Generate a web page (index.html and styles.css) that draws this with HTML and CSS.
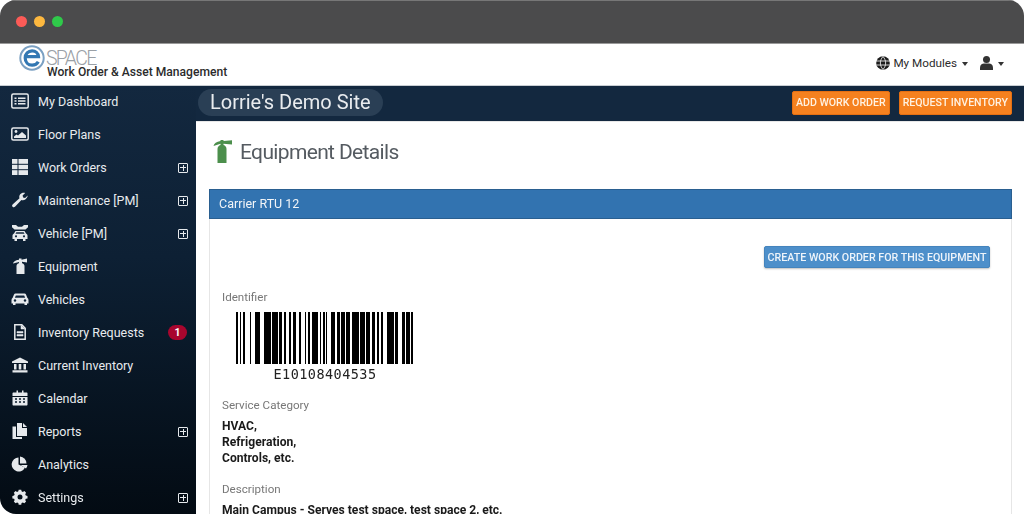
FILE: index.html
```html
<!DOCTYPE html>
<html lang="en">
<head>
<meta charset="utf-8">
<title>eSPACE</title>
<link rel="stylesheet" href="styles.css">
</head>
<body>
<div class="window">
  <div class="chrome">
    <span class="dot red"></span><span class="dot amber"></span><span class="dot green"></span>
  </div>
  <header class="topbar">
    <div class="logo">
      <svg class="logo-mark" width="40" height="28" viewBox="0 0 40 28"><circle cx="14" cy="14" r="11.700" fill="#fff" stroke="#7ba0c2" stroke-width="2"/><path d="M7.500 12.600h13c-.3-3.600-3-5.800-6.400-5.800-4 0-6.900 3-6.900 7.200s2.900 7.200 6.900 7.200c2.800 0 5-1.200 6.200-3.400" fill="none" stroke="#3378b3" stroke-width="3.200"/></svg>
      <div class="logo-text">
        <div class="logo-space">SPACE</div>
        <div class="logo-sub">Work Order &amp; Asset Management</div>
      </div>
    </div>
    <div class="top-actions">
      <svg width="14" height="14" viewBox="0 0 14 14"><circle cx="7" cy="7" r="6.800" fill="#1c1c1c"/><path d="M.5 5h13M.5 9h13M7 .5c-3.500 4-3.500 9 0 13M7 .5c3.500 4 3.500 9 0 13" fill="none" stroke="#fff" stroke-width=".8"/></svg>
      <span class="modules">My Modules</span><span class="caret"></span>
      <svg class="user" width="13" height="14" viewBox="0 0 13 14"><circle cx="6.500" cy="3.600" r="3.500" fill="#333"/><path d="M0 14v-2.500C0 9 2 7.500 4 7.500h5c2 0 4 1.500 4 4V14z" fill="#333"/></svg><span class="caret"></span>
    </div>
  </header>
  <div class="body">
    <nav class="sidebar">
      <a class="item"><svg class="ico" viewBox="0 0 18 16"><rect x=".8" y="1" width="16.400" height="14" rx="1.500" fill="none" stroke="currentColor" stroke-width="1.500"/><path d="M3.500 4.500h2v1.500h-2zM7 4.500h7.500V6H7zM3.500 7.300h2v1.500h-2zM7 7.300h7.500v1.500H7zM3.500 10.100h2v1.500h-2zM7 10.100h7.500v1.500H7z" fill="currentColor"/></svg><span class="label">My Dashboard</span></a>
      <a class="item"><svg class="ico" viewBox="0 0 18 16"><rect x=".8" y="2" width="16.400" height="12" rx="1.500" fill="none" stroke="currentColor" stroke-width="1.500"/><circle cx="5" cy="5.500" r="1.400" fill="currentColor"/><path d="M3 12v-1.500l2.500-2 1.500 1 4-3.500 4 3.500V12z" fill="currentColor"/></svg><span class="label">Floor Plans</span></a>
      <a class="item"><svg class="ico" viewBox="0 0 18 16"><path d="M1 0h16v16H1z" fill="currentColor"/><path d="M1 5.300h16M1 10.700h16M7 0v16" stroke="#10243a" stroke-width="1"/></svg><span class="label">Work Orders</span><span class="plus"></span></a>
      <a class="item"><svg class="ico" viewBox="0 0 18 16"><path d="M16.700 3.500l-2.600 2.500-2-.5-.5-2L14.200.9c-2-.6-4 0-5 1.300-1 1.200-1.200 2.700-.7 4L1.800 12.200c-.9.900-.9 1.900-.2 2.600s1.800.7 2.600-.2l6.200-6.500c1.400.5 3 .2 4.200-.9 1.300-1.200 2.200-2.700 2.100-3.700z" fill="currentColor"/></svg><span class="label">Maintenance [PM]</span><span class="plus"></span></a>
      <a class="item"><svg class="ico" viewBox="0 0 18 16"><path d="M1 0h4l2 1.700h4L13 0h4v2.200l-2.500 2.300h-11L1 2.200z" fill="currentColor"/><path d="M4.500 6h9l1.500 2.500c1 .5 1.500 1.300 1.500 2.300V14h-2v2h-2.500v-2h-6v2H3.500v-2h-2v-3.200c0-1 .5-1.800 1.500-2.300z" fill="currentColor"/><path d="M5.300 7.300h7.400l.8 1.400h-9z" fill="#10243a"/><circle cx="5" cy="11.300" r="1.100" fill="#10243a"/><circle cx="13" cy="11.300" r="1.100" fill="#10243a"/></svg><span class="label">Vehicle [PM]</span><span class="plus"></span></a>
      <a class="item"><svg class="ico" viewBox="0 0 18 16"><path d="M5.500 8c0-1.500 1-2.500 2.500-2.800V4L2 5.500c.5-1.500 2-3.500 6-3.800V.5h2.500v1.200L16 .5v4l-5 -.7v1.400c1.400.3 2.500 1.300 2.500 2.800V16h-8z" fill="currentColor"/></svg><span class="label">Equipment</span></a>
      <a class="item"><svg class="ico" viewBox="0 0 18 16"><path d="M4.500 2.500h9c.7 0 1.200.3 1.500 1l1.300 3.300c.8.500 1.200 1.200 1.200 2.200v3.500h-1.500V14h-2.500v-1.500H4.500V14H2v-1.500H.5V9c0-1 .4-1.700 1.200-2.200L3 3.500c.3-.7.800-1 1.500-1z" fill="currentColor"/><path d="M4.800 4.500h8.400l.9 2.200H3.900z" fill="#10243a"/><circle cx="4" cy="9.500" r="1.200" fill="#10243a"/><circle cx="14" cy="9.500" r="1.200" fill="#10243a"/></svg><span class="label">Vehicles</span></a>
      <a class="item"><svg class="ico" viewBox="0 0 18 16"><path d="M3.800.8h7l3.400 3.400v11H3.800z" fill="none" stroke="currentColor" stroke-width="1.500"/><path d="M10 1v4h4M6 7.500h6V9H6zM6 10.500h6V12H6z" fill="currentColor" stroke="currentColor" stroke-width=".5"/></svg><span class="label">Inventory Requests</span><span class="badge">1</span></a>
      <a class="item"><svg class="ico" viewBox="0 0 18 16"><path d="M9 .5l8 4v1.500H1V4.500zM3 7h2.500v5.500H3zM7.700 7h2.600v5.500H7.700zM12.500 7H15v5.500h-2.500zM1.500 13.300h15V15.500h-15z" fill="currentColor"/></svg><span class="label">Current Inventory</span></a>
      <a class="item"><svg class="ico" viewBox="0 0 18 16"><path d="M2.500 2.500h3V.5h1.500v2h4V.5h1.500v2h3c.6 0 1 .4 1 1V6H1.500V3.500c0-.6.400-1 1-1zM1.500 7h15v7.500c0 .6-.4 1-1 1h-13c-.6 0-1-.4-1-1z" fill="currentColor"/><path d="M4 9h2M8 9h2M12 9h2M4 12h2M8 12h2M12 12h2" stroke="#0a1a2a" stroke-width="1.600"/></svg><span class="label">Calendar</span></a>
      <a class="item"><svg class="ico" viewBox="0 0 18 16"><path d="M6 0h5v5h5v8H6z" fill="currentColor"/><path d="M12 0l4 4h-4zM1.500 3.500H5V14h6v2H1.500z" fill="currentColor"/></svg><span class="label">Reports</span><span class="plus"></span></a>
      <a class="item"><svg class="ico" viewBox="0 0 18 16"><path d="M7.500 1.500A7 7 0 1 0 14 11.500L7.500 8.500z" fill="currentColor"/><path d="M9 .5a7 7 0 0 1 6.500 7H9z" fill="currentColor"/><path d="M9.500 9l7 0a7 7 0 0 1-1.500 3.500z" fill="currentColor"/></svg><span class="label">Analytics</span></a>
      <a class="item"><svg class="ico" viewBox="0 0 18 16"><path d="M7.500.5h3l.4 2 1.500.7 1.800-1 2 2-1 1.800.7 1.500 2 .4v3l-2 .4-.7 1.500 1 1.800-2 2-1.800-1-1.500.7-.4 2h-3l-.4-2-1.500-.7-1.800 1-2-2 1-1.800-.7-1.500-2-.4v-3l2-.4.7-1.500-1-1.800 2-2 1.800 1 1.500-.7z" transform="translate(1.300 .2) scale(.85)" fill="currentColor"/><circle cx="9" cy="8" r="2.500" fill="#06111c"/></svg><span class="label">Settings</span><span class="plus"></span></a>
    </nav>
    <main class="main">
      <div class="sitebar">
        <div class="site">Lorrie's Demo Site</div>
        <div class="site-btns">
          <button class="btn-orange">ADD WORK ORDER</button>
          <button class="btn-orange">REQUEST INVENTORY</button>
        </div>
      </div>
      <div class="content">
        <h1 class="title"><svg width="20" height="23" viewBox="0 0 20 23"><path d="M5.500 9c0-2 1.300-3.500 3-4V3.800L1.500 6C2 3.500 4.500 1.500 8.500 1V0h3v1L20 .2V4.500l-8.500-.8V5c1.800.5 3 2 3 4v14h-9z" fill="#4c8f4c"/></svg><span>Equipment Details</span></h1>
        <section class="panel">
          <div class="panel-head">Carrier RTU 12</div>
          <div class="panel-body">
            <div class="action-row"><button class="btn-blue">CREATE WORK ORDER FOR THIS EQUIPMENT</button></div>
            <div class="field-label">Identifier</div>
            <div class="barcode-block">
              <svg class="barcode" width="178" height="52" viewBox="0 0 178 52"><path fill="#000" d="M0 0h2v52H0zM4 0h1v52H4zM7 0h2v52H7zM14 0h1v52h-1zM19 0h5v52h-5zM28 0h7v52h-7zM36 0h6v52h-6zM43 0h3v52h-3zM48 0h2v52h-2zM53 0h2v52h-2zM57 0h3v52h-3zM63 0h2v52h-2zM69 0h1v52h-1zM72 0h2v52h-2zM76 0h6v52h-6zM84 0h1v52h-1zM87 0h2v52h-2zM90 0h1v52h-1zM95 0h4v52h-4zM101 0h3v52h-3zM105 0h4v52h-4zM110 0h4v52h-4zM116 0h7v52h-7zM124 0h5v52h-5zM130 0h4v52h-4zM136 0h3v52h-3zM141 0h2v52h-2zM145 0h2v52h-2zM151 0h7v52h-7zM159 0h3v52h-3zM166 0h3v52h-3zM170 0h4v52h-4zM175 0h2v52h-2z"/></svg>
              <div class="barcode-num">E10108404535</div>
            </div>
            <div class="field-label">Service Category</div>
            <div class="field-value">HVAC,<br>Refrigeration,<br>Controls, etc.</div>
            <div class="field-label">Description</div>
            <div class="field-value">Main Campus - Serves test space, test space 2, etc.</div>
          </div>
        </section>
      </div>
    </main>
  </div>
</div>
</body>
</html>
```
FILE: styles.css
```css
* { box-sizing: border-box; }
html, body { margin: 0; padding: 0; background: #fff; }
body { width: 1024px; height: 514px; overflow: hidden; font-family: Roboto, "Liberation Sans", sans-serif; }
.window { width: 1024px; height: 514px; display: flex; flex-direction: column; overflow: hidden; border-radius: 16px 16px 0 16px; background: #fff; filter: blur(.35px); }
.chrome { height: 44px; flex: none; background: #4b4b4c; border-top: 1px solid #777; border-bottom: 1px solid #999; display: flex; align-items: center; padding: 0 0 2px 16px; gap: 7px; }
.dot { width: 11px; height: 11px; border-radius: 50%; }
.red { background: #fc5b57; }
.amber { background: #fdb83f; }
.green { background: #2fc94a; }
.topbar { height: 41px; flex: none; background: #fff; display: flex; justify-content: space-between; align-items: center; padding: 0 20px 0 18px; }
.logo { display: flex; height: 41px; width: 240px; }
.logo-mark { flex: none; }
.logo-text { margin-left: -11px; }
.logo-space { font-size: 19.500px; line-height: 13px; color: #9aa0a6; margin-top: 8px; letter-spacing: -1.700px; margin-left: -1px; font-weight: 300; }
.logo-sub { font-size: 12.100px; line-height: 14px; font-weight: 500; color: #2b2b2b; white-space: nowrap; }
.top-actions { display: flex; align-items: center; font-size: 11.700px; color: #2c2c2c; padding-bottom: 3px; }
.modules { margin-left: 3px; }
.caret { width: 0; height: 0; border-left: 3.500px solid transparent; border-right: 3.500px solid transparent; border-top: 4px solid #333; margin-left: 5px; margin-top: 2px; }
.user { margin-left: 12px; }
.body { flex: 1; display: flex; min-height: 0; }
.sidebar { width: 196px; flex: none; background: linear-gradient(#13283f 0%, #0d2034 40%, #030b13 100%); border-top: 1px solid #c9ced3; }
.item { display: flex; align-items: center; height: 33px; padding: 0 8px 2px 11px; color: #e8ebee; font-size: 12.500px; }
.ico { width: 18px; height: 16px; color: #e6e9ec; flex: none; margin-top: -2px; }
.label { margin-left: 9px; flex: 1; white-space: nowrap; margin-top: -1px; }
.plus { width: 10px; height: 10px; border: 1px solid #e6e9ec; border-radius: 1px; background: linear-gradient(#e6e9ec,#e6e9ec) center/6px 1px no-repeat, linear-gradient(#e6e9ec,#e6e9ec) center/1px 6px no-repeat; }
.badge { width: 19px; height: 15px; border-radius: 8px; background: #a8062e; color: #fff; font-size: 10.500px; font-weight: 700; display: flex; align-items: center; justify-content: center; margin-right: 1px; }
.main { flex: 1; min-width: 0; display: flex; flex-direction: column; background: #fff; }
.sitebar { height: 36px; flex: none; background: #13283f; border-top: 1px solid #c9ced3; display: flex; justify-content: space-between; align-items: center; padding: 0 12px 2px 2px; }
.site { height: 27px; background: #2a3f55; border-radius: 14px; color: #e9ecef; font-size: 20px; line-height: 27px; padding: 0 12px; min-width: 183px; }
.site-btns { display: flex; gap: 9px; }
.btn-orange { height: 24px; border: 1px solid #e56f12; background: #f5811f; color: #fff2e2; font: 500 10.600px Roboto, sans-serif; border-radius: 2px; padding: 0 3px; white-space: nowrap; }
.content { flex: 1; min-height: 0; padding: 0 12px 0 13px; border-top: 1px solid #e8e8e8; overflow: hidden; }
.title { margin: 13px 0 0 3px; height: 33px; display: flex; align-items: center; gap: 8px; font-size: 21px; font-weight: 400; color: #555b61; letter-spacing: -.65px; }
.panel { margin-top: 21px; border-left: 1px solid #e6e6e6; border-right: 1px solid #e6e6e6; }
.panel-head { height: 30px; background: #3273b0; border: 1px solid #2a5f90; color: #f2f5f8; font-size: 12.500px; line-height: 28px; padding-left: 9px; margin: 0 -1px; }
.panel-body { padding: 27px 21px 0 12px; }
.action-row { display: flex; justify-content: flex-end; height: 22px; margin-bottom: 22px; }
.btn-blue { height: 22px; width: 226px; border: 1px solid #4484bd; background: #4d8fca; color: #eef4fa; font: 500 10.700px Roboto, sans-serif; border-radius: 2px; padding: 0; box-shadow: 0 1px 2px rgba(0,0,0,.25); white-space: nowrap; }
.field-label { font-size: 11.600px; line-height: 14px; color: #777; }
.barcode-block { width: 178px; margin: 8px 0 0 14px; height: 86px; }
.barcode { display: block; }
.barcode-num { font-family: "DejaVu Sans Mono", monospace; font-size: 13.500px; line-height: 16px; color: #222; text-align: center; letter-spacing: .45px; margin-top: 2px; white-space: nowrap; }
.field-value { font-size: 12.100px; line-height: 16px; font-weight: 700; color: #1a1a1a; margin: 6px 0 16px; }
```
